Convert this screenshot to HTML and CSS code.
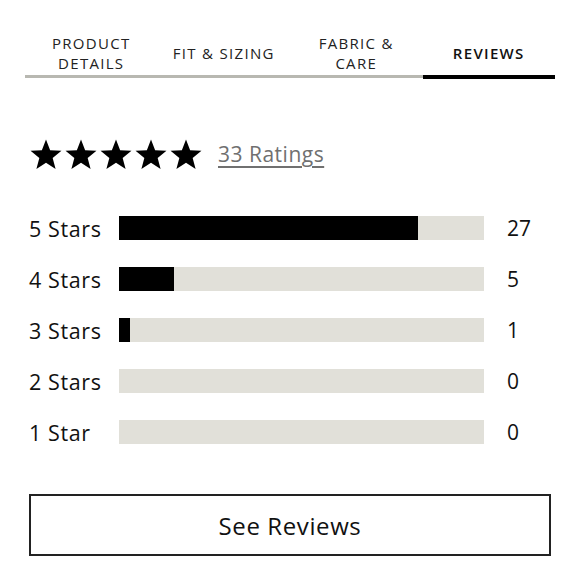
FILE: index.html
```html
<!DOCTYPE html>
<html lang="en">
<head>
    <meta charset="UTF-8">
    <meta name="viewport" content="width=device-width, initial-scale=1.0">
    <title>Reviews</title>
    <link rel="stylesheet" href="styles.css">
</head>
<body>
    <div class="tabs">
        <div class="tab">Product<br>Details</div>
        <div class="tab">Fit &amp; Sizing</div>
        <div class="tab">Fabric &amp;<br>Care</div>
        <div class="tab active">Reviews</div>
    </div>

    <div class="reviews">
        <div class="rating-summary">
            <div class="stars">
                <svg viewBox="0 0 24 24"><path d="M12 1.2l3.1 7.9 8.5.5-6.6 5.4 2.2 8.3L12 18.6l-7.2 4.7 2.2-8.3L.4 9.6l8.5-.5z"/></svg>
                <svg viewBox="0 0 24 24"><path d="M12 1.2l3.1 7.9 8.5.5-6.6 5.4 2.2 8.3L12 18.6l-7.2 4.7 2.2-8.3L.4 9.6l8.5-.5z"/></svg>
                <svg viewBox="0 0 24 24"><path d="M12 1.2l3.1 7.9 8.5.5-6.6 5.4 2.2 8.3L12 18.6l-7.2 4.7 2.2-8.3L.4 9.6l8.5-.5z"/></svg>
                <svg viewBox="0 0 24 24"><path d="M12 1.2l3.1 7.9 8.5.5-6.6 5.4 2.2 8.3L12 18.6l-7.2 4.7 2.2-8.3L.4 9.6l8.5-.5z"/></svg>
                <svg viewBox="0 0 24 24"><path d="M12 1.2l3.1 7.9 8.5.5-6.6 5.4 2.2 8.3L12 18.6l-7.2 4.7 2.2-8.3L.4 9.6l8.5-.5z"/></svg>
            </div>
            <a href="#" class="rating-count">33 Ratings</a>
        </div>

        <div class="breakdown">
            <div class="bar-row">
                <span class="bar-label">5 Stars</span>
                <div class="bar"><div class="bar-fill" style="width: 81.8%"></div></div>
                <span class="bar-count">27</span>
            </div>
            <div class="bar-row">
                <span class="bar-label">4 Stars</span>
                <div class="bar"><div class="bar-fill" style="width: 15.2%"></div></div>
                <span class="bar-count">5</span>
            </div>
            <div class="bar-row">
                <span class="bar-label">3 Stars</span>
                <div class="bar"><div class="bar-fill" style="width: 3%"></div></div>
                <span class="bar-count">1</span>
            </div>
            <div class="bar-row">
                <span class="bar-label">2 Stars</span>
                <div class="bar"><div class="bar-fill" style="width: 0%"></div></div>
                <span class="bar-count">0</span>
            </div>
            <div class="bar-row">
                <span class="bar-label">1 Star</span>
                <div class="bar"><div class="bar-fill" style="width: 0%"></div></div>
                <span class="bar-count">0</span>
            </div>
        </div>

        <button type="button" class="see-reviews">See Reviews</button>
    </div>
</body>
</html>
```

FILE: styles.css
```css
body { margin: 0; background: #fff; color: #111; font-family: "Open Sans", "Noto Sans", sans-serif; }

.tabs { display: flex; align-items: flex-start; margin: 33px 25px 0; }
.tab { flex: 1; height: 40px; padding-bottom: 2px; display: flex; align-items: center; justify-content: center; text-align: center; text-transform: uppercase; font-size: 15px; line-height: 20px; letter-spacing: 1.3px; color: #222; border-bottom: 3px solid #b8b8b1; }
.tab.active { font-weight: 600; color: #111; border-bottom: 4px solid #000; }

.reviews { padding: 0 29px; }

.rating-summary { display: flex; align-items: center; margin-top: 59px; height: 32px; }
.stars { display: flex; gap: 3px; margin-left: 1px; }
.stars svg { width: 32px; height: 32px; fill: #000; }
.rating-count { margin-left: 16px; font-size: 21px; letter-spacing: 0.5px; color: #707070; text-decoration: underline; text-underline-offset: 4px; }

.breakdown { margin-top: 46px; display: flex; flex-direction: column; gap: 27px; }
.bar-row { display: flex; align-items: center; height: 24px; }
.bar-label { width: 90px; font-size: 21.5px; letter-spacing: 0.6px; }
.bar { width: 365px; height: 24px; background: #e1e0d9; }
.bar-fill { height: 100%; background: #000; }
.bar-count { margin-left: 23px; font-size: 21px; }

.see-reviews { display: block; width: 100%; height: 62px; margin-top: 50px; background: #fff; border: 2px solid #222; font-family: inherit; font-size: 24px; letter-spacing: 0.6px; color: #111; }
```
